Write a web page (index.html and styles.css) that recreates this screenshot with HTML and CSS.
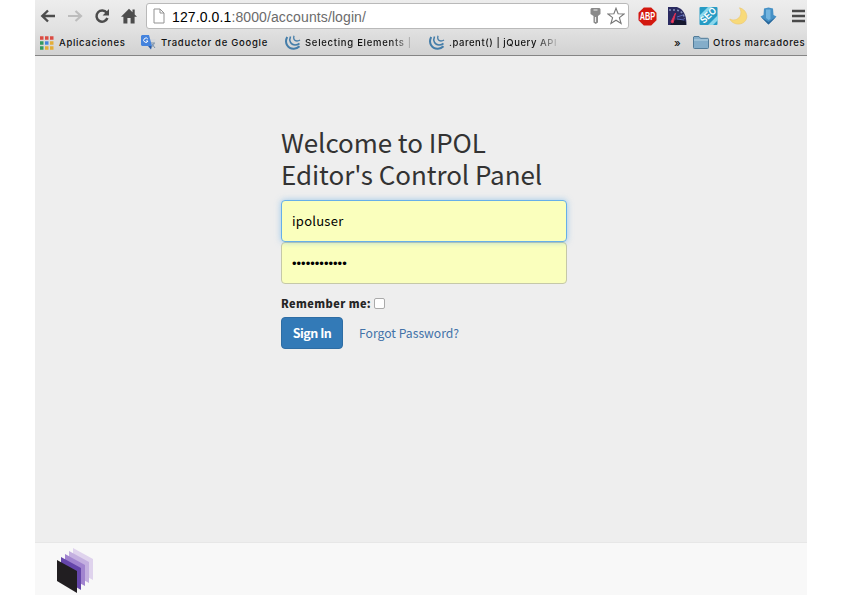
FILE: index.html
```html
<!DOCTYPE html>
<html lang="es">
<head>
<meta charset="utf-8">
<title>IPOL Editor's Control Panel</title>
<link rel="stylesheet" href="styles.css">
</head>
<body>
<div class="window">
<header class="chrome">
  <div class="toolbar">
    <nav class="nav">
      <svg width="16" height="16" viewBox="0 0 16 16"><path d="M8 2.500 2.300 8 8 13.500M2.500 8H15" fill="none" stroke="#4c4c4c" stroke-width="2.400"/></svg>
      <svg width="16" height="16" viewBox="0 0 16 16"><path d="M8.500 3 14 8l-5.500 5M14 8H1" fill="none" stroke="#bdbdbd" stroke-width="2.200"/></svg>
      <svg width="16" height="16" viewBox="0 0 16 16"><path d="M12.700 4.800A5.600 5.600 0 1 0 13.400 10" fill="none" stroke="#4c4c4c" stroke-width="2.500"/><path d="M15 1v6.500H8.600z" fill="#4c4c4c"/></svg>
      <svg width="16" height="16" viewBox="0 0 16 16"><path d="M8 .8 0 8.800h2.400V15.500h4V10h3.200v5.500h4V8.800H16l-2.300-2.300V1.500h-2.200v2.800z" fill="#4c4c4c"/></svg>
    </nav>
    <div class="omnibox">
      <svg class="page" width="12" height="16" viewBox="0 0 12 16"><path d="M1 1h6l4 4v10H1zM7 1v4h4" fill="#fff" stroke="#929292"/></svg>
      <span class="url"><b>127.0.0.1</b>:8000/accounts/login/</span>
      <svg class="key" width="11" height="16" viewBox="0 0 11 16"><path d="M1.500 0h8l1 1v5L8 8v6.500L5.700 16 3.500 14.500V8L.5 6V1z" fill="#8a8a8a"/><path d="M3.500 2h4M5.500 9v5" stroke="#eee" stroke-width="1.200"/></svg>
      <svg width="18" height="18" viewBox="0 0 18 18"><path d="m9 1.200 2.100 5.500 6 .2-4.700 3.700 1.700 5.900L9 13.200l-5.100 3.300 1.700-5.900L.9 6.900l6-.2z" fill="#fff" stroke="#777" stroke-width="1.100"/></svg>
    </div>
    <div class="extensions">
      <svg width="19" height="19" viewBox="0 0 19 19"><path d="M5.800.5h7.400l5.300 5.300v7.400l-5.300 5.300H5.800L.5 13.200V5.800z" fill="#d3180f"/><text class="abp" x="9.500" y="12.800" text-anchor="middle" textLength="15.500" lengthAdjust="spacingAndGlyphs">ABP</text></svg>
      <svg width="19" height="18" viewBox="0 0 19 18"><path d="M0 0h9c6 2 9.500 7 9.500 18H0z" fill="#2a2a60"/><path d="M1 3h7c5 .5 8 4 8.500 9" fill="none" stroke="#8490b8" stroke-width="1.500" stroke-dasharray="2 2"/><path d="M2 18c5-7 11-8 16-3v3z" fill="#15172e"/><path d="m3 15 4.500-9L5 16z" fill="#f04467" stroke="#dc3052"/><path d="m9 10 6-2M9 12l7 1" stroke="#5867b8"/></svg>
      <svg width="19" height="18" viewBox="0 0 19 18"><rect x=".5" width="18" height="18" rx="1" fill="#269bc4"/><path d="M1 8 9 0h4L1 12zM9 18 19 8v5l-5 5z" fill="#8ad7ec"/><text class="seo" x="0" y="0" transform="translate(5 17) rotate(-44)" textLength="18" lengthAdjust="spacingAndGlyphs">SEO</text></svg>
      <svg width="19" height="18" viewBox="0 0 19 18"><path d="M10.500.8c9.200 2.500 9.700 13.500 1.500 15.900C7.500 18 2.500 15.800.8 12c3.400 2 8 .9 10-2.400 1.800-3 1.300-6.500-.3-8.800z" fill="#f8da79" stroke="#edc874" stroke-width=".7"/></svg>
      <svg width="17" height="18" viewBox="0 0 17 18"><path d="M4 1.500 8.500.5l4.500 1 .5 6.500 3 1.500-8 8-8-8 3-1.500z" fill="#4590c5"/><path d="M6 2.500h4.500V12L8.500 13 6 11z" fill="#72b4df"/><path d="m1 10 7.500 5 7.500-5-7.500 7.500z" fill="#2a6699"/></svg>
      <svg class="menu" width="13" height="14" viewBox="0 0 13 14"><path d="M0 2h13M0 7h13M0 12h13" stroke="#4a4a4a" stroke-width="2.600"/></svg>
    </div>
  </div>
  <div class="bookmarks">
    <a class="bm apps"><svg width="14" height="14" viewBox="0 0 14 14"><path d="M0 2h3.500M5 2h3.500M10 2h3.500" stroke="#db4b42" stroke-width="3.400"/><path d="M0 7h3.500M0 12h3.500" stroke="#33995e" stroke-width="3.400"/><path d="M5 7h3.500" stroke="#4384db" stroke-width="3.400"/><path d="M10 7h3.500M5 12h3.500M10 12h3.500" stroke="#e3ad38" stroke-width="3.400"/></svg><span>Aplicaciones</span></a>
    <a class="bm translate"><svg width="15" height="15" viewBox="0 0 15 15"><path d="M6 4h8.500v10.500H9z" fill="#d5d7da"/><path d="M1 0h7l3 11H1L0 10V1z" fill="#4483dd"/><path d="m7 11 3 3.500 1-3.500z" fill="#285aa7"/><path d="M6.800 4A2.200 2.200 0 1 0 7 6H5" fill="none" stroke="#fff"/><path d="M10 8h4m-1 0c0 2-2 4-3 4m1-3 3 4" fill="none" stroke="#7890a9"/></svg><span>Traductor de Google</span></a>
    <a class="bm select"><svg width="16" height="15" viewBox="0 0 16 15"><g fill="none" stroke="#447da9"><path d="M2.200 2C-1 8 3 14 9 13.700c2.400 0 4-.9 5.500-2.400" stroke-width="2"/><path d="M5.500 1.500C3.500 6 6 10 10 10c2 0 3.200-.5 4.500-1.500" stroke-width="1.600"/><path d="M9 .8C8 4 9.500 6 12 6c1.500 0 2-.3 3-1" stroke-width="1.300"/></g></svg><span class="fade">Selecting Elements |</span></a>
    <a class="bm parent"><svg width="16" height="15" viewBox="0 0 16 15"><g fill="none" stroke="#447da9"><path d="M2.200 2C-1 8 3 14 9 13.700c2.400 0 4-.9 5.500-2.400" stroke-width="2"/><path d="M5.500 1.500C3.500 6 6 10 10 10c2 0 3.200-.5 4.500-1.500" stroke-width="1.600"/><path d="M9 .8C8 4 9.500 6 12 6c1.500 0 2-.3 3-1" stroke-width="1.300"/></g></svg><span class="fade">.parent() | jQuery API</span></a>
    <span class="more">»</span>
    <a class="bm other"><svg width="16" height="13" viewBox="0 0 16 13"><path d="M1 .5h5l1.500 1.800H14.500q1 0 1 1v8.200q0 1-1 1h-13q-1 0-1-1V1z" fill="#84adc9" stroke="#537c99"/><path d="M1 4h14" stroke="#bad5e4"/></svg><span>Otros marcadores</span></a>
  </div>
</header>
<main class="content">
  <form class="login">
    <h1>Welcome to IPOL<br>Editor's Control Panel</h1>
    <div class="field focused">ipoluser</div>
    <div class="field password">••••••••••••</div>
    <label class="remember"><span>Remember me:</span><i class="check"></i></label>
    <div class="actions"><button type="button">Sign In</button><a class="forgot">Forgot Password?</a></div>
  </form>
</main>
<footer class="footer">
  <svg width="38" height="47" viewBox="0 0 38 47"><path d="m16 1 20 11v21L16 22z" fill="#dfd3ed"/><path d="m12 4 20 11v21L12 25z" fill="#c4b0e0"/><path d="m8 7 20 11v21L8 28z" fill="#a184cf"/><path d="m4 10 20 11v22L4 31z" fill="#6546ab"/><path d="m0 13 20 11v22L0 34z" fill="#211e21"/></svg>
</footer>
</div>
</body>
</html>
```
FILE: styles.css
```css
* { box-sizing: border-box; }
body { margin: 0; background: #fff; font-family: "Noto Sans CJK SC", "Noto Sans", sans-serif; overflow: hidden; }
svg { display: block; flex: none; overflow: hidden; }
.window { width: 772px; height: 595px; margin-left: 35px; display: flex; flex-direction: column; overflow: hidden; background: #eee; }
.chrome { height: 56px; flex: none; background: linear-gradient(#ededed, #e2e2e2 50%, #d2d2d2); border-bottom: 1px solid #858585; font-family: "Liberation Sans", Arial, sans-serif; }
.toolbar { height: 32px; display: flex; align-items: center; }
.nav { display: flex; gap: 11px; width: 111px; padding-left: 5px; }
.omnibox { width: 483px; height: 26px; display: flex; align-items: center; background: #fff; border: 1px solid #b9b9b9; border-radius: 3px; padding: 0 3px 0 6px; }
.url { margin-left: 7px; flex: 1; font-size: 14px; line-height: 26px; padding-top: 1px; color: #6b6b6b; letter-spacing: .11px; white-space: nowrap; }
.url b { font-weight: 400; color: #000; }
.key { margin-right: 6px; }
.extensions { display: flex; align-items: center; gap: 11.500px; margin-left: 8.500px; }
.menu { margin-left: 4px; }
.abp { font: bold 10px "Liberation Sans", sans-serif; fill: #fff; }
.seo { font: bold 10px "Liberation Sans", sans-serif; fill: #fff; }
.bookmarks { height: 21px; display: flex; align-items: center; padding-left: 5px; font-family: Inter, sans-serif; font-size: 9.500px; font-weight: 500; color: #111; }
.bm { display: flex; align-items: center; gap: 5px; white-space: nowrap; flex: none; }
.apps { width: 101px; letter-spacing: .68px; }
.translate { width: 144px; letter-spacing: .72px; }
.select { width: 144px; letter-spacing: .72px; gap: 4px; }
.parent { width: 245px; letter-spacing: .56px; gap: 4px; }
.fade { background: linear-gradient(90deg, #111 80%, #bbb); background-clip: text; -webkit-background-clip: text; color: transparent; }
.more { width: 19px; font-size: 11px; line-height: 18px; }
.other { letter-spacing: .68px; gap: 4px; }
.content { height: 486px; flex: none; padding: 70px 0 0 246px; }
.login { width: 286px; }
h1 { margin: 0 0 11px; font-size: 26px; line-height: 31.500px; font-weight: 400; color: #333; letter-spacing: -.06px; white-space: nowrap; }
.field { height: 42px; padding: 0 10px; border: 1px solid #c5c8a8; border-radius: 4px; background: #faffbd; color: #000; font-size: 13px; line-height: 40px; letter-spacing: .25px; }
.focused { position: relative; border-color: #66afe9; box-shadow: 0 0 6px rgba(102,175,233,.6); }
.password { font-family: "Liberation Sans", sans-serif; letter-spacing: .01px; padding-top: 1px; }
.remember { height: 33px; padding-top: 5px; display: flex; align-items: center; font-size: 11px; line-height: 16px; font-weight: 900; color: #252525; letter-spacing: .42px; }
.remember span { margin-top: -1px; }
.check { width: 11px; height: 11px; margin-left: 3px; border: 1px solid #aaa; border-radius: 2px; background: #fff; }
.actions { display: flex; align-items: center; }
button { width: 62px; height: 32px; padding: 0 0 2px; border: 1px solid #2e6da4; border-radius: 4px; background: #337ab7; color: #fff; font: 700 12.500px "Noto Sans CJK SC", sans-serif; letter-spacing: -.5px; }
.forgot { margin-left: 16px; font-size: 12.200px; line-height: 32px; color: #4272a8; white-space: nowrap; }
.footer { flex: 1; padding: 4px 0 0 22px; background: #f8f8f8; border-top: 1px solid #e7e7e7; }
```
